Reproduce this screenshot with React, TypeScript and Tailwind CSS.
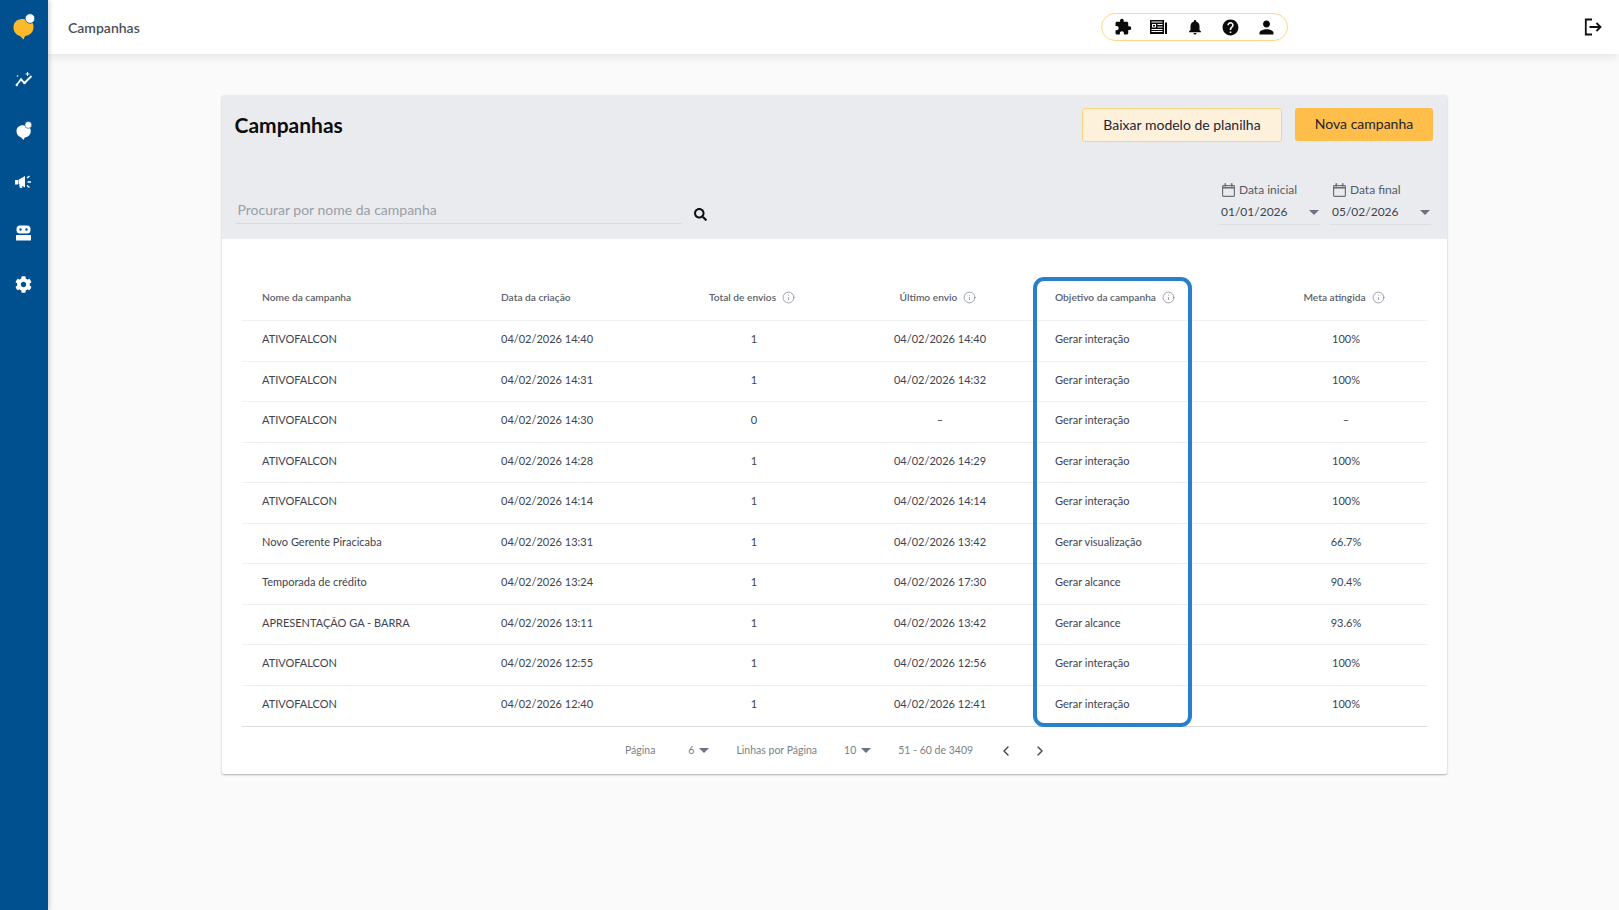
import { FaCog, FaSearch } from 'react-icons/fa';
import { MdExtension, MdHelp, MdNotifications, MdPerson } from 'react-icons/md';
import { ChevronLeft, ChevronRight, Info } from 'lucide-react';

const rows = [
  ['ATIVOFALCON', '04/02/2026 14:40', '1', '04/02/2026 14:40', 'Gerar interação', '100%'],
  ['ATIVOFALCON', '04/02/2026 14:31', '1', '04/02/2026 14:32', 'Gerar interação', '100%'],
  ['ATIVOFALCON', '04/02/2026 14:30', '0', '–', 'Gerar interação', '–'],
  ['ATIVOFALCON', '04/02/2026 14:28', '1', '04/02/2026 14:29', 'Gerar interação', '100%'],
  ['ATIVOFALCON', '04/02/2026 14:14', '1', '04/02/2026 14:14', 'Gerar interação', '100%'],
  ['Novo Gerente Piracicaba', '04/02/2026 13:31', '1', '04/02/2026 13:42', 'Gerar visualização', '66.7%'],
  ['Temporada de crédito', '04/02/2026 13:24', '1', '04/02/2026 17:30', 'Gerar alcance', '90.4%'],
  ['APRESENTAÇÃO GA - BARRA', '04/02/2026 13:11', '1', '04/02/2026 13:42', 'Gerar alcance', '93.6%'],
  ['ATIVOFALCON', '04/02/2026 12:55', '1', '04/02/2026 12:56', 'Gerar interação', '100%'],
  ['ATIVOFALCON', '04/02/2026 12:40', '1', '04/02/2026 12:41', 'Gerar interação', '100%'],
];

const gridCols = 'grid grid-cols-[239px_179px_188px_184px_233px_162px] items-center';

function Logo({ size, body }: { size: number; body: string }) {
  return (
    <svg width={size} height={size} viewBox="0 0 24 28">
      <path d="M10 6C5 6 1.500 9.500 1.500 14.500c0 4.500 3 7.500 6.500 8.500l3.500 3.500 1.500-3.500c5-.5 8.500-4 8.500-9 0-2-.5-3.500-1.500-5L15 7c-1.500-.7-3-1-5-1z" fill={body} />
      <circle cx="18" cy="5.500" r="4.800" fill="#ffffff" stroke="#00508f" strokeWidth=".8" />
    </svg>
  );
}

function TrendIcon() {
  return (
    <svg width="18" height="18" viewBox="0 0 18 18" fill="none" stroke="#fff" strokeWidth="1.800" strokeLinejoin="round">
      <path d="M1.500 14 6 8.500l3.500 3.500L16.500 5" />
      <circle cx="1.800" cy="14" r="1.200" fill="#fff" stroke="none" />
      <circle cx="6" cy="8.500" r="1.200" fill="#fff" stroke="none" />
      <circle cx="9.500" cy="12" r="1.200" fill="#fff" stroke="none" />
      <path d="M12.500 1v4M10.500 3h4" strokeWidth="1" />
      <circle cx="2.500" cy="5" r=".8" fill="#fff" stroke="none" />
    </svg>
  );
}

function MegaphoneIcon() {
  return (
    <svg width="18" height="18" viewBox="0 0 18 18" fill="#fff">
      <path d="M0 7h3v4.500H0zM3.500 6.800 10 3v11.500L3.500 10.800z" />
      <path d="M4 11.500h2.500l1 3.500H5z" />
      <path d="m12 5 2.500-2M12.500 9H16M12 12.500l2.500 2" stroke="#fff" strokeWidth="1.400" />
    </svg>
  );
}

function RobotIcon() {
  return (
    <svg width="15" height="16" viewBox="0 0 15 16" fill="#fff">
      <path fillRule="evenodd" d="M4 .500h7A3.500 3.500 0 0 1 14.500 4v1A3.500 3.500 0 0 1 11 8.500H4A3.500 3.500 0 0 1 .500 5V4A3.500 3.500 0 0 1 4 .500zM4.500 3.300a1.200 1.200 0 1 0 0 2.400 1.200 1.200 0 0 0 0-2.400zm6 0a1.200 1.200 0 1 0 0 2.400 1.200 1.200 0 0 0 0-2.400z" />
      <rect x="0" y="10" width="15" height="5.500" rx=".6" />
    </svg>
  );
}

function NewsIcon() {
  return (
    <svg width="17" height="14" viewBox="0 0 17 14" fill="#0b0b0b">
      <path fillRule="evenodd" d="M0 0h14v14H0zM1.500 1.500v1h11v-1zM2 4v3.500h4V4zm5.500 0v1h5V4zm0 2.500v1h5v-1zM1.500 9v1h11V9zm0 2v1h11v-1z" />
      <rect x="15" y="2.500" width="2" height="11.500" />
      <rect x="3" y="5" width="2" height="1.500" />
    </svg>
  );
}

function LogoutIcon() {
  return (
    <svg width="18" height="18" viewBox="0 0 18 18" fill="none" stroke="#111" strokeWidth="1.800">
      <path d="M8 1.500H1.800v15H8" />
      <path d="M5.500 9h11M12.500 5l4 4-4 4" />
    </svg>
  );
}

function CalendarIcon() {
  return (
    <svg width="13" height="14" viewBox="0 0 13 14" fill="none" stroke="#6b7079" strokeWidth="1.200">
      <rect x=".6" y="2.600" width="11.800" height="10.800" rx=".8" />
      <path d="M.6 4.800h11.800" strokeWidth="1.600" />
      <path d="M3.300 .2v3.400M9.700 .2v3.400" strokeWidth="1.600" />
    </svg>
  );
}

function Caret() {
  return <span className="inline-block h-0 w-0 border-x-[5px] border-t-[5px] border-x-transparent border-t-[#6b7280]" />;
}

function DateField({ label, value }: { label: string; value: string }) {
  return (
    <div className="flex w-[101px] flex-col">
      <div className="flex items-center gap-[4px] pl-[3px] text-[12px] leading-[16px] text-[#555b66]">
        <CalendarIcon />
        <span>{label}</span>
      </div>
      <div className="mt-[5px] flex items-center justify-between border-b border-[#dcdee3] pb-[3px] pl-[2px] pr-[1px] text-[12px] leading-[18px] text-[#3d4350]">
        <span>{value}</span>
        <Caret />
      </div>
    </div>
  );
}

function HeadCell({ label, center, pad }: { label: string; center?: boolean; pad?: string }) {
  return (
    <div className={`flex items-center gap-[6px] ${center ? 'justify-center pr-[4px]' : pad || 'pl-5'}`}>
      <span>{label}</span>
      <Info size={13} strokeWidth={1.200} className="text-[#6b7280]" />
    </div>
  );
}

export default function App() {
  return (
    <div className="flex h-[910px] w-full overflow-hidden bg-[#fafafa] font-['Lato','Noto_Sans',sans-serif]">
      <aside className="z-20 flex w-[48px] shrink-0 flex-col items-center bg-[#00508f] shadow-[2px_0_4px_rgba(0,0,0,0.15)]">
        <div className="flex h-[54px] items-center justify-center pr-[1px]"><Logo size={28} body="#fdb92c" /></div>
        <nav className="flex flex-col items-center">
          <div className="flex h-[51px] w-full items-center justify-center pt-[1px]"><TrendIcon /></div>
          <div className="flex h-[51px] items-center justify-center"><Logo size={20} body="#ffffff" /></div>
          <div className="flex h-[51px] items-center justify-center"><MegaphoneIcon /></div>
          <div className="flex h-[52px] items-center justify-center pr-[1px]"><RobotIcon /></div>
          <div className="flex h-[51px] items-center justify-center pr-[2px]"><FaCog size={17} color="#fff" /></div>
        </nav>
      </aside>

      <div className="flex min-w-0 flex-1 flex-col">
        <header className="z-10 flex h-[54px] items-center bg-white pl-[20px] pr-[17px] shadow-[0_2px_10px_rgba(0,0,0,0.1)]">
          <span className="w-[1033px] text-[14px] font-semibold text-[#4a4f59]">Campanhas</span>
          <div className="flex h-[28px] w-[187px] items-center justify-center rounded-full border border-[#ffd78a] text-[#0b0b0b]">
            <span className="flex w-[36px] justify-center"><MdExtension size={18} /></span>
            <span className="flex w-[36px] justify-center"><NewsIcon /></span>
            <span className="flex w-[36px] justify-center"><MdNotifications size={18} /></span>
            <span className="flex w-[36px] justify-center"><MdHelp size={19} /></span>
            <span className="flex w-[36px] justify-center"><MdPerson size={21} /></span>
          </div>
          <div className="ml-auto"><LogoutIcon /></div>
        </header>

        <main className="pl-[173.500px] pt-[41px]">
          <section className="relative w-[1225.500px] rounded-[2px] bg-white shadow-[0_1px_2px_rgba(0,0,0,0.3)]">
            <div className="h-[144px] rounded-t-[2px] bg-[#e9ebef] px-[14px]">
              <div className="flex items-start justify-between pt-[13px]">
                <h1 className="ml-[-1px] pt-[3px] text-[21px] font-bold leading-[28px] text-[#0d0d0d]">Campanhas</h1>
                <div className="flex gap-[13px]">
                  <button className="h-[34px] w-[200px] rounded-[3px] border border-[#ffd27f] bg-[#fef1dc] pb-[2px] text-[14px] text-[#1f2430]">Baixar modelo de planilha</button>
                  <button className="h-[33px] w-[138px] rounded-[3px] bg-[#ffbd4a] pb-[2px] text-[14px] text-[#1f2430]">Nova campanha</button>
                </div>
              </div>
              <div className="mt-[40px] flex items-end">
                <div className="mb-[1px] w-[446px] border-b border-[#d8dade] pb-[3px] pl-[2px] text-[14px] leading-[20px] text-[#9a9ea6]">Procurar por nome da campanha</div>
                <FaSearch size={13} className="mb-[4px] ml-[12px] text-[#111]" />
                <div className="ml-auto flex gap-[10px] pr-[2px]">
                  <DateField label="Data inicial" value="01/01/2026" />
                  <DateField label="Data final" value="05/02/2026" />
                </div>
              </div>
            </div>

            <div className="pl-[20.500px] pr-[20px] pt-[38px]">
              <div className={`${gridCols} h-[44px] border-b border-[#f0f1f3] pb-[2px] text-[10.200px] font-semibold text-[#5c616b]`}>
                <div className="pl-5">Nome da campanha</div>
                <div className="pl-5">Data da criação</div>
                <HeadCell label="Total de envios" center />
                <HeadCell label="Último envio" center />
                <HeadCell label="Objetivo da campanha" pad="pl-[23px]" />
                <HeadCell label="Meta atingida" center />
              </div>
              {rows.map((row, i) => (
                <div key={i} className={`${gridCols} border-b text-[11px] text-[#3d4350] ${i === rows.length - 1 ? 'h-[41.500px] border-[#d9dbdf] pb-[4px]' : 'h-[40.500px] border-[#eeeff1] pb-[3px]'}`}>
                  <div className="pl-5">{row[0]}</div>
                  <div className="pl-5">{row[1]}</div>
                  <div className="text-center">{row[2]}</div>
                  <div className="text-center">{row[3]}</div>
                  <div className="pl-[23px]">{row[4]}</div>
                  <div className="text-center">{row[5]}</div>
                </div>
              ))}
              <div className="flex h-[47px] items-center justify-center text-[10.500px] text-[#7a7f88]">
                <span className="ml-[4px]">Página</span>
                <span className="ml-[33px] flex items-center gap-[5px]">6 <Caret /></span>
                <span className="ml-[27px]">Linhas por Página</span>
                <span className="ml-[27px] flex items-center gap-[5px]">10 <Caret /></span>
                <span className="ml-[27px]">51 - 60 de 3409</span>
                <ChevronLeft size={16} className="ml-[25px] text-[#444]" />
                <ChevronRight size={16} className="ml-[18px] text-[#444]" />
              </div>
            </div>

            <div className="pointer-events-none absolute left-[811px] top-[182px] h-[450px] w-[159.500px] rounded-[11px] border-[4px] border-[#2a7fc9]" />
          </section>
        </main>
      </div>
    </div>
  );
}
